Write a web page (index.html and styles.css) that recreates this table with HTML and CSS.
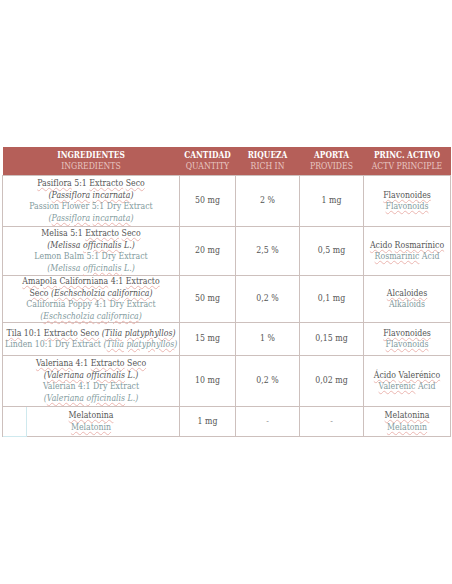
FILE: index.html
```html
<!DOCTYPE html>
<html lang="es">
<head>
    <meta charset="UTF-8">
    <meta name="viewport" content="width=device-width, initial-scale=1.0">
    <title>Ingredientes</title>
    <link rel="stylesheet" href="styles.css">
</head>
<body>
    <table class="ingredients">
        <colgroup>
            <col class="col-name">
            <col class="col-qty">
            <col class="col-rich">
            <col class="col-prov">
            <col class="col-active">
        </colgroup>
        <thead>
            <tr>
                <th>INGREDIENTES<span class="en">INGREDIENTS</span></th>
                <th>CANTIDAD<span class="en">QUANTITY</span></th>
                <th>RIQUEZA<span class="en">RICH IN</span></th>
                <th>APORTA<span class="en">PROVIDES</span></th>
                <th>PRINC. ACTIVO<span class="en">ACTV PRINCIPLE</span></th>
            </tr>
        </thead>
        <tbody>
            <tr class="row-a">
                <td>
                    <span class="es"><u>Pasiflora</u> 5:1 <u>Extracto</u> <u>Seco</u></span>
                    <span class="es"><i>(<u>Passiflora</u> <u>incarnata</u>)</i></span>
                    <span class="en">Passion Flower 5:1 Dry Extract</span>
                    <span class="en"><i>(<u>Passiflora</u> <u>incarnata</u>)</i></span>
                </td>
                <td>50 mg</td>
                <td>2 %</td>
                <td>1 mg</td>
                <td><span class="es"><u>Flavonoides</u></span><span class="en"><u>Flavonoids</u></span></td>
            </tr>
            <tr class="row-b">
                <td>
                    <span class="es">Melisa 5:1 <u>Extracto</u> <u>Seco</u></span>
                    <span class="es"><i>(Melissa <u>officinalis</u> L.)</i></span>
                    <span class="en">Lemon Balm 5:1 Dry Extract</span>
                    <span class="en"><i>(Melissa <u>officinalis</u> L.)</i></span>
                </td>
                <td>20 mg</td>
                <td>2,5 %</td>
                <td>0,5 mg</td>
                <td><span class="es"><u>Acido</u> <u>Rosmarínico</u></span><span class="en"><u>Rosmarinic</u> Acid</span></td>
            </tr>
            <tr class="row-c">
                <td>
                    <span class="es"><u>Amapola</u> <u>Californiana</u> 4:1 <u>Extracto</u></span>
                    <span class="es"><u>Seco</u> <i>(<u>Eschscholzia</u> <u>californica</u>)</i></span>
                    <span class="en">California Poppy 4:1 Dry Extract</span>
                    <span class="en"><i>(<u>Eschscholzia</u> <u>californica</u>)</i></span>
                </td>
                <td>50 mg</td>
                <td>0,2 %</td>
                <td>0,1 mg</td>
                <td><span class="es"><u>Alcaloides</u></span><span class="en">Alkaloids</span></td>
            </tr>
            <tr class="row-d">
                <td>
                    <span class="es"><u>Tila</u> 10:1 <u>Extracto</u> <u>Seco</u> <i>(<u>Tilia</u> <u>platyphyllos</u>)</i></span>
                    <span class="en">Linden 10:1 Dry Extract <i>(<u>Tilia</u> <u>platyphyllos</u>)</i></span>
                </td>
                <td>15 mg</td>
                <td>1 %</td>
                <td>0,15 mg</td>
                <td><span class="es"><u>Flavonoides</u></span><span class="en"><u>Flavonoids</u></span></td>
            </tr>
            <tr class="row-e">
                <td>
                    <span class="es"><u>Valeriana</u> 4:1 <u>Extracto</u> <u>Seco</u></span>
                    <span class="es"><i>(<u>Valeriana</u> <u>officinalis</u> L.)</i></span>
                    <span class="en">Valerian 4:1 Dry Extract</span>
                    <span class="en"><i>(<u>Valeriana</u> <u>officinalis</u> L.)</i></span>
                </td>
                <td>10 mg</td>
                <td>0,2 %</td>
                <td>0,02 mg</td>
                <td><span class="es"><u>Ácido</u> <u>Valerénico</u></span><span class="en"><u>Valerenic</u> Acid</span></td>
            </tr>
            <tr class="row-f">
                <td class="cell-marked">
                    <div class="focus-box"></div>
                    <span class="es"><u>Melatonina</u></span>
                    <span class="en"><u>Melatonin</u></span>
                </td>
                <td>1 mg</td>
                <td class="dash">-</td>
                <td class="dash">-</td>
                <td><span class="es"><u>Melatonina</u></span><span class="en"><u>Melatonin</u></span></td>
            </tr>
        </tbody>
    </table>
</body>
</html>
```

FILE: styles.css
```css
body {
    margin: 0;
    padding: 147px 3px 0 2px;
    background-color: #fff;
    font-family: "DejaVu Serif", "Liberation Serif", serif;
    font-stretch: condensed;
    color: #555;
}
.ingredients {
    width: 448px;
    table-layout: fixed;
    border-collapse: collapse;
    font-size: 8.7px;
    line-height: 11.5px;
}
.col-name { width: 177px; }
.col-qty { width: 56px; }
.col-rich { width: 64px; }
.col-prov { width: 64px; }
.col-active { width: 87px; }

.ingredients th {
    background-color: #b55f59;
    color: #fff;
    font-weight: bold;
    font-size: 8.3px;
    line-height: 11px;
    height: 28px;
    padding: 0 2px;
    text-align: center;
    vertical-align: middle;
}
.ingredients th .en {
    display: block;
    font-weight: normal;
    font-size: 8.6px;
    color: #e8c6c1;
}
.ingredients td {
    border: 1px solid #cdc0bd;
    padding: 0 2px;
    text-align: center;
    vertical-align: middle;
    white-space: nowrap;
}
.ingredients td .es,
.ingredients td .en {
    display: block;
}
.ingredients td .en {
    color: #839b9e;
}
.ingredients u {
    text-decoration: underline wavy #ebb6b1;
    text-decoration-thickness: 1px;
    text-underline-offset: 1px;
}
.row-a td { height: 50px; }
.row-b td { height: 48px; }
.row-c td { height: 46px; }
.row-d td { height: 32px; }
.row-e td { height: 50px; }
.row-f td { height: 29px; }

.dash {
    color: #9a9a9a;
}
.cell-marked {
    position: relative;
}
.focus-box {
    position: absolute;
    left: 0;
    top: 0;
    width: 23px;
    height: 29px;
    border-right: 1px solid #cfe9ee;
    border-bottom: 1px solid #cfe9ee;
}
```
